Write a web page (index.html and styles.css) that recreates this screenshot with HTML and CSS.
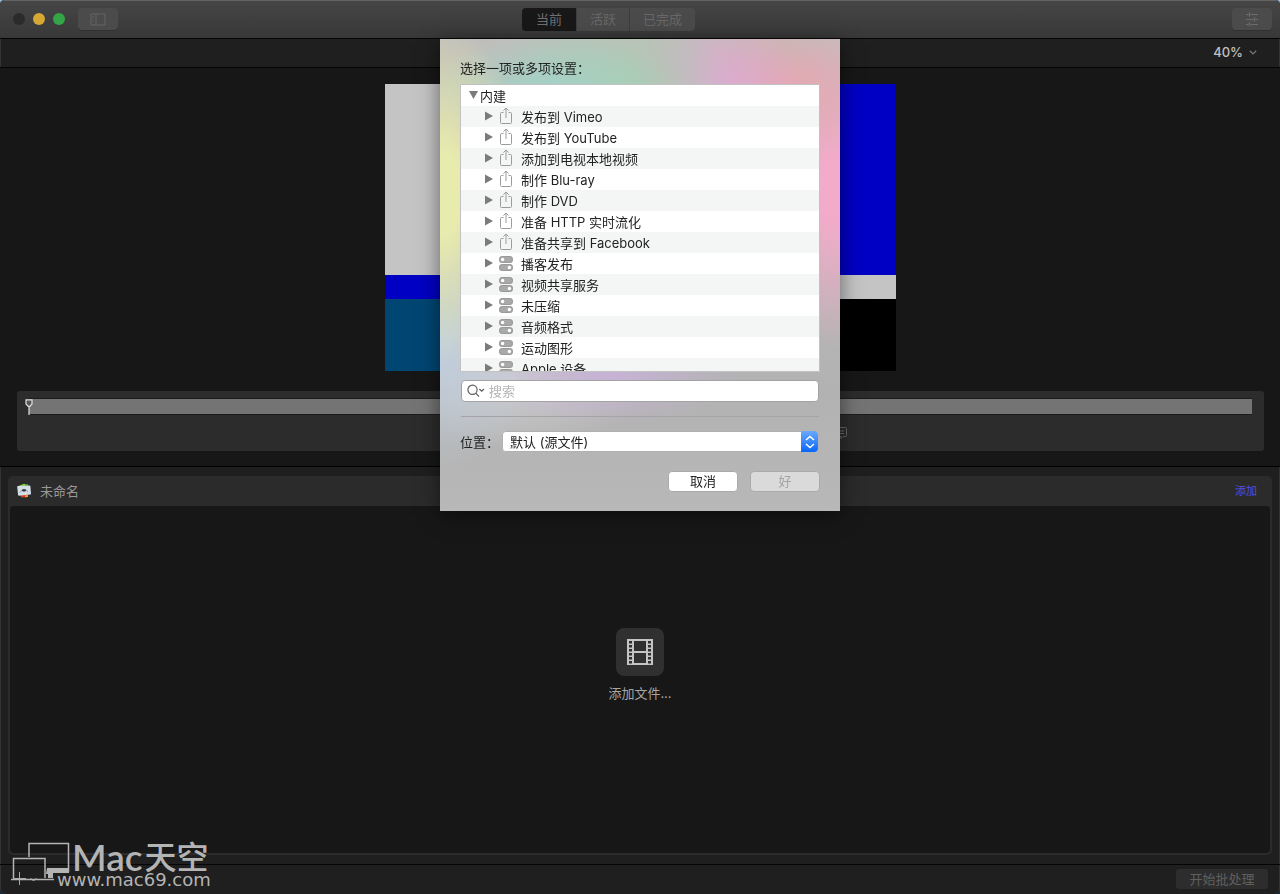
FILE: index.html
```html
<!DOCTYPE html>
<html lang="zh-CN">
<head>
    <meta charset="UTF-8">
    <meta name="viewport" content="width=device-width, initial-scale=1.0">
    <title>未命名</title>
    <link rel="stylesheet" href="styles.css">
</head>
<body>
    <!-- Iconos compartidos -->
    <svg class="sprite" width="0" height="0" aria-hidden="true">
        <symbol id="share" viewBox="0 0 14 18">
            <path d="M4.500 5.500H2.600Q1.500 5.500 1.500 6.600V15.400Q1.500 16.500 2.600 16.500H11.400Q12.500 16.500 12.500 15.400V6.600Q12.500 5.500 11.400 5.500H9.500M7 11V1M4.400 3.600L7 1L9.600 3.600" fill="none" stroke="#9b9b9b"/>
        </symbol>
        <symbol id="toggles" viewBox="0 0 14 18">
            <rect x="0" y="2" width="14" height="7" rx="3.5" fill="#a9a9a9"/>
            <rect x="0" y="10" width="14" height="7" rx="3.5" fill="#a9a9a9"/>
            <rect x=".5" y="2.5" width="13" height="6" rx="3" fill="none" stroke="#999"/>
            <rect x=".5" y="10.5" width="13" height="6" rx="3" fill="none" stroke="#999"/>
            <circle cx="3.6" cy="5.5" r="1.7" fill="#fff"/>
            <circle cx="10.4" cy="13.5" r="1.7" fill="#fff"/>
        </symbol>
        <symbol id="arrow" viewBox="0 0 8 10">
            <path d="M0 .5L8 5L0 9.5Z" fill="#7b7b7b"/>
        </symbol>
    </svg>

    <div class="window">
        <header class="toolbar">
            <div class="toolbar-side">
                <div class="lights">
                    <button class="light close" aria-label="关闭"></button>
                    <button class="light minimize" aria-label="最小化"></button>
                    <button class="light maximize" aria-label="缩放"></button>
                </div>
                <button class="tool-button" aria-label="边栏">
                    <svg width="16" height="13" viewBox="0 0 16 13" fill="none" stroke="#646464"><path d="M1 1H15V12H1ZM6 1V12"/><path d="M2.5 3.5H4M2.5 6H4M2.5 8.5H4" stroke-width=".8"/></svg>
                </button>
            </div>
            <nav class="segments">
                <button class="segment active">当前</button>
                <button class="segment">活跃</button>
                <button class="segment">已完成</button>
            </nav>
            <div class="toolbar-side right">
                <button class="tool-button" aria-label="检查器">
                    <svg width="14" height="14" viewBox="0 0 14 14" stroke="#6c6c6c"><path d="M1 2.5H3M6 2.5H13M1 7.5H8M11 7.5H13M1 12.5H3M6 12.5H13"/><path d="M4.5 .5V4.5M9.5 5.5V9.5M4.5 10.5V14" stroke-width="1.6"/></svg>
                </button>
            </div>
        </header>

        <div class="zoom-bar">
            <button class="zoom-button">40%
                <svg width="8" height="5" viewBox="0 0 8 5" fill="none" stroke="#777" stroke-width="1.3"><path d="M.8 .7L4 3.9L7.2 .7"/></svg>
            </button>
        </div>

        <section class="preview">
            <div class="color-bars">
                <div class="bar-row top">
                    <i class="gray"></i><i class="yellow"></i><i class="cyan"></i><i class="green"></i><i class="magenta"></i><i class="red"></i><i class="blue"></i>
                </div>
                <div class="bar-row middle">
                    <i class="blue"></i><i class="black"></i><i class="magenta"></i><i class="black"></i><i class="cyan"></i><i class="black"></i><i class="gray"></i>
                </div>
                <div class="bar-row bottom">
                    <i class="navy"></i><i class="white"></i><i class="purple"></i><i class="black"></i><i class="black"></i>
                </div>
            </div>
            <div class="timeline">
                <div class="track">
                    <svg class="playhead" width="8" height="16" viewBox="0 0 8 16"><path d="M1 .8H7V5L4.8 7.4H3.2L1 5Z" fill="#555" stroke="#e0e0e0" stroke-width="1.2"/><path d="M4 7.5V16" stroke="#e0e0e0" stroke-width="1.2"/></svg>
                </div>
                <button class="marker-button" aria-label="标记">
                    <svg width="14" height="14" viewBox="0 0 14 14" fill="none" stroke="#686868"><path d="M2.5 1.5H12.5Q13.5 1.5 13.5 2.5V9.5Q13.5 10.5 12.5 10.5H10L8 12.5V10.5H2.5Q1.5 10.5 1.5 9.5V2.5Q1.5 1.5 2.5 1.5ZM4 5H11M4 7.5H11"/></svg>
                </button>
            </div>
        </section>

        <main class="batch-area">
            <section class="batch">
                <div class="batch-header">
                    <svg width="16" height="16" viewBox="0 0 16 16">
                        <path d="M3.5 2.5L8 .8L11 1.5V4H3Z" fill="#7fce35"/>
                        <path d="M9 1.2L12 1V4H9Z" fill="#3a9d53"/>
                        <path d="M5 12L12 11V14L5 14.5Z" fill="#e1351f"/>
                        <path d="M9 12.5L12 12V14L9 14.3Z" fill="#f6a21e"/>
                        <path d="M1.2 4Q1 3 2 2.9L13.4 2.4Q14.3 2.3 14.4 3.2L15 10.7Q15 11.5 14.2 11.6L3.1 12.8Q2.2 12.9 2.1 12Z" fill="#d5dde6"/>
                        <path d="M4 9.500L6.500 6.500M12 9L9.500 6.300" stroke="#8b96a3"/>
                        <ellipse cx="8" cy="7.3" rx="2" ry="1.4" fill="#3b3f44"/>
                    </svg>
                    <span>未命名</span>
                    <a href="#" class="add-link">添加</a>
                </div>
                <div class="batch-body">
                    <button class="add-file">
                        <span class="film">
                            <svg width="26" height="28" viewBox="0 0 26 28">
                                <path d="M0 1H26V27H0Z" fill="#c4c4c4"/>
                                <path d="M7 3H19V13H7ZM7 15H19V25H7Z" fill="#303030"/>
                                <path d="M3.5 3V26M22.5 3V26" stroke="#303030" stroke-width="3" stroke-dasharray="2.5 1.5"/>
                            </svg>
                        </span>
                        添加文件...
                    </button>
                </div>
            </section>
        </main>

        <footer class="status-bar">
            <button class="plus-button" aria-label="添加">
                <svg width="24" height="14" viewBox="0 0 24 14" fill="none" stroke="#aaa"><path d="M6.5 0V13M0 6.5H13M17.5 6L20.5 9L23.5 6"/></svg>
            </button>
            <button class="start-button" disabled>开始批处理</button>
        </footer>

        <form class="dialog">
            <h2>选择一项或多项设置：</h2>
            <ul class="settings">
                <li class="group"><button type="button" class="disclosure open" aria-label="折叠"><svg width="9" height="8" viewBox="0 0 9 8"><path d="M0 0H9L4.5 8Z" fill="#7b7b7b"/></svg></button>内建</li>
                <li><button type="button" class="disclosure" aria-label="展开"><svg width="8" height="10"><use href="#arrow"/></svg></button><svg class="kind" width="14" height="18"><use href="#share"/></svg>发布到 Vimeo</li>
                <li><button type="button" class="disclosure" aria-label="展开"><svg width="8" height="10"><use href="#arrow"/></svg></button><svg class="kind" width="14" height="18"><use href="#share"/></svg>发布到 YouTube</li>
                <li><button type="button" class="disclosure" aria-label="展开"><svg width="8" height="10"><use href="#arrow"/></svg></button><svg class="kind" width="14" height="18"><use href="#share"/></svg>添加到电视本地视频</li>
                <li><button type="button" class="disclosure" aria-label="展开"><svg width="8" height="10"><use href="#arrow"/></svg></button><svg class="kind" width="14" height="18"><use href="#share"/></svg>制作 Blu-ray</li>
                <li><button type="button" class="disclosure" aria-label="展开"><svg width="8" height="10"><use href="#arrow"/></svg></button><svg class="kind" width="14" height="18"><use href="#share"/></svg>制作 DVD</li>
                <li><button type="button" class="disclosure" aria-label="展开"><svg width="8" height="10"><use href="#arrow"/></svg></button><svg class="kind" width="14" height="18"><use href="#share"/></svg>准备 HTTP 实时流化</li>
                <li><button type="button" class="disclosure" aria-label="展开"><svg width="8" height="10"><use href="#arrow"/></svg></button><svg class="kind" width="14" height="18"><use href="#share"/></svg>准备共享到 Facebook</li>
                <li><button type="button" class="disclosure" aria-label="展开"><svg width="8" height="10"><use href="#arrow"/></svg></button><svg class="kind" width="14" height="18"><use href="#toggles"/></svg>播客发布</li>
                <li><button type="button" class="disclosure" aria-label="展开"><svg width="8" height="10"><use href="#arrow"/></svg></button><svg class="kind" width="14" height="18"><use href="#toggles"/></svg>视频共享服务</li>
                <li><button type="button" class="disclosure" aria-label="展开"><svg width="8" height="10"><use href="#arrow"/></svg></button><svg class="kind" width="14" height="18"><use href="#toggles"/></svg>未压缩</li>
                <li><button type="button" class="disclosure" aria-label="展开"><svg width="8" height="10"><use href="#arrow"/></svg></button><svg class="kind" width="14" height="18"><use href="#toggles"/></svg>音频格式</li>
                <li><button type="button" class="disclosure" aria-label="展开"><svg width="8" height="10"><use href="#arrow"/></svg></button><svg class="kind" width="14" height="18"><use href="#toggles"/></svg>运动图形</li>
                <li><button type="button" class="disclosure" aria-label="展开"><svg width="8" height="10"><use href="#arrow"/></svg></button><svg class="kind" width="14" height="18"><use href="#toggles"/></svg>Apple 设备</li>
            </ul>
            <div class="search">
                <svg width="18" height="14" viewBox="0 0 18 14" fill="none" stroke="#5c5c5c"><circle cx="5.5" cy="5.8" r="4.6" stroke-width="1.2"/><path d="M8.8 9.2L12 12.6M12.4 5L14.7 7.2L17 5" stroke-width="1.2"/></svg>
                <input type="search" aria-label="搜索" placeholder="搜索">
            </div>
            <hr>
            <div class="location">
                <label for="location">位置：</label>
                <div class="select-box">
                    <select id="location">
                        <option>默认 (源文件)</option>
                    </select>
                    <span class="stepper">
                        <svg width="10" height="14" viewBox="0 0 10 14" fill="none" stroke="#fff" stroke-width="1.5"><path d="M1 5L5 1.500L9 5M1 9L5 12.500L9 9"/></svg>
                    </span>
                </div>
            </div>
            <div class="dialog-buttons">
                <button type="button">取消</button>
                <button type="submit" disabled>好</button>
            </div>
        </form>

        <div class="watermark">
            <svg width="60" height="40" viewBox="0 0 60 40" fill="none" stroke="#b4b4b4">
                <path d="M18 15V1.500H57.500V30" stroke-width="1.5"/>
                <path d="M36 26H58V31H42V36H37V32H35Z" fill="#b4b4b4" stroke="none"/>
                <path d="M2.500 36V16.500H34V36" stroke-width="1.5"/>
                <path d="M0 37.500H43" stroke-width="1.5"/>
            </svg>
            <div class="watermark-text">
                <div class="brand">Mac<span>天空</span></div>
                <div class="site">www.mac69.com</div>
            </div>
        </div>
    </div>
</body>
</html>
```
FILE: styles.css
```css
* {
    box-sizing: border-box;
}

body {
    margin: 0;
    font-family: Inter, "Noto Sans CJK SC", sans-serif;
    font-size: 13px;
    line-height: 20px;
    background: linear-gradient(#8fb6d8, #16283c);
}

button, input, select {
    font: inherit;
    margin: 0;
    padding: 0;
    border: none;
    background: none;
    color: inherit;
}

svg {
    display: block;
    flex: none;
}

.sprite {
    position: absolute;
}

.window {
    position: relative;
    display: flex;
    flex-direction: column;
    min-height: 100vh;
    background-color: #1f1f1f;
    border-radius: 5px;
    overflow: hidden;
    box-shadow: inset 1px 0 #333, inset -1px 0 #333;
}

/* Barra superior */
.toolbar {
    display: flex;
    align-items: center;
    height: 39px;
    padding: 0 8px 0 13px;
    background: linear-gradient(#464646, #383838);
    border-bottom: 1px solid #050505;
    box-shadow: inset 0 1px #646464;
}

.toolbar-side {
    display: flex;
    flex: 1;
    align-items: center;
    gap: 13px;
}

.toolbar-side.right {
    justify-content: flex-end;
}

.lights {
    display: flex;
    gap: 8px;
}

.light {
    width: 12px;
    height: 12px;
    border-radius: 50%;
    background-color: #2b2b2b;
}

.light.minimize {
    background-color: #d6a833;
}

.light.maximize {
    background-color: #34a546;
}

.tool-button {
    display: flex;
    align-items: center;
    justify-content: center;
    width: 40px;
    height: 22px;
    border-radius: 4px;
    background-color: #4b4b4b;
    box-shadow: 0 1px #303030;
}

.segments {
    display: flex;
    height: 23px;
    margin-right: 68px;
    border-radius: 4px;
    overflow: hidden;
    color: #686868;
}

.segment {
    padding: 0 13px;
    line-height: 22px;
    background-color: #4b4b4b;
    border-left: 1px solid #3e3e3e;
}

.segment.active {
    padding: 0 14px;
    background-color: #181818;
    color: #717171;
    border: none;
}

.zoom-bar {
    display: flex;
    align-items: center;
    justify-content: flex-end;
    height: 29px;
    padding: 0 23px 2px 0;
    border-bottom: 1px solid #050505;
}

.zoom-button {
    display: flex;
    align-items: center;
    gap: 6px;
    font-weight: 500;
    color: #c0c0c0;
}

/* Vista previa */
.preview {
    padding: 16px 16px 15px 17px;
    background-color: #171717;
    border-bottom: 1px solid #000;
}

.color-bars {
    width: 511px;
    height: 287px;
    margin: 0 auto 20px;
    display: flex;
    flex-direction: column;
}

.bar-row {
    display: flex;
}

.bar-row i {
    flex: 1;
}

.bar-row.top {
    flex: 8;
}

.bar-row.middle {
    flex: 1;
}

.bar-row.bottom {
    flex: 3;
}

.gray { background-color: #c4c4c4; }
.yellow { background-color: #c4c400; }
.cyan { background-color: #00c4c4; }
.green { background-color: #00c400; }
.magenta { background-color: #c400c4; }
.red { background-color: #c40000; }
.blue { background-color: #0000c4; }
.black { background-color: #000; }
.navy { background-color: #004673; }
.white { background-color: #fff; }
.purple { background-color: #32006a; }

.timeline {
    height: 60px;
    padding: 8px 12px;
    border-radius: 3px;
    background-color: #2c2c2c;
}

.track {
    position: relative;
    height: 15px;
    background-color: #747474;
    box-shadow: 0 1px #1c1c1c, 0 -1px #1c1c1c;
}

.playhead {
    position: absolute;
    left: -4px;
    top: 0;
}

.marker-button {
    display: block;
    margin: 12px 0 0 calc(50% + 192px);
}

/* Lote */
.batch-area {
    display: flex;
    flex: 1;
    padding: 9px 8px;
}

.batch {
    display: flex;
    flex: 1;
    flex-direction: column;
    padding: 0 2px 2px;
    border-radius: 5px;
    background-color: #2b2b2b;
}

.batch-header {
    display: flex;
    align-items: center;
    gap: 8px;
    height: 30px;
    padding: 0 13px 0 6px;
    color: #999;
}

.add-link {
    margin-left: auto;
    font-size: 11px;
    color: #5550e0;
    text-decoration: none;
}

.batch-body {
    display: flex;
    flex: 1;
    align-items: center;
    justify-content: center;
    border-radius: 4px;
    background-color: #171717;
}

.add-file {
    display: flex;
    flex-direction: column;
    align-items: center;
    gap: 7px;
    padding-bottom: 28px;
    color: #a5a5a5;
}

.film {
    display: flex;
    align-items: center;
    justify-content: center;
    width: 48px;
    height: 48px;
    border-radius: 8px;
    background-color: #303030;
}

.status-bar {
    display: flex;
    align-items: center;
    justify-content: space-between;
    height: 30px;
    padding: 0 12px 2px 13px;
    border-top: 1px solid #050505;
}

.start-button {
    width: 92px;
    height: 20px;
    border-radius: 3px;
    background-color: #2d2d2d;
    color: #606060;
}

/* Hoja de ajustes */
.dialog {
    position: absolute;
    top: 39px;
    left: 50%;
    width: 400px;
    margin-left: -200px;
    padding: 19px 20px;
    color: #222;
    background:
        radial-gradient(ellipse 90px 170px at 0 155px, #e8ebae 25%, transparent),
        radial-gradient(ellipse 100px 130px at 0 300px, #c0cfdf, transparent),
        radial-gradient(ellipse 120px 60px at 110px 52px, #a3d2c7, transparent),
        radial-gradient(ellipse 120px 75px at 175px 50px, #a9ceae, transparent),
        radial-gradient(ellipse 90px 70px at 275px 50px, #deaad6, transparent),
        radial-gradient(ellipse 100px 75px at 340px 50px, #e8a6ae, transparent),
        radial-gradient(ellipse 80px 160px at 395px 150px, #f2abc9 20%, transparent),
        radial-gradient(ellipse 130px 50px at 170px 336px, #c7b2d6, transparent),
        radial-gradient(ellipse 140px 70px at 70px 340px, #cfcfd2, transparent),
        linear-gradient(#c0bebb, #b2b2b2 75%, #b8b8b8);
    box-shadow: 0 4px 20px rgba(0, 0, 0, 0.5);
}

.dialog h2 {
    margin: 0 0 6px;
    font-size: 13px;
    font-weight: normal;
}

.settings {
    height: 288px;
    margin: 0;
    padding: 0;
    list-style: none;
    border: 1px solid #c2c2c2;
    background-color: #fff;
    overflow-y: auto;
    scrollbar-width: none;
}

.settings li {
    display: flex;
    align-items: center;
    height: 21px;
    padding-left: 24px;
}

.settings li:nth-child(even) {
    background-color: #f4f5f5;
}

.settings .group {
    padding-left: 8px;
}

.disclosure {
    margin: 0 6px 2px 0;
}

.disclosure.open {
    margin-right: 2px;
}

.kind {
    margin: 0 8px 2px 0;
}

.search {
    display: flex;
    align-items: center;
    gap: 4px;
    height: 22px;
    margin: 8px 1px 14px;
    padding: 0 5px;
    border: 1px solid #a3a3a3;
    border-radius: 4px;
    background-color: #fff;
}

.search input {
    flex: 1;
    min-width: 0;
    outline: none;
}

.search input::placeholder {
    color: #b5b5b5;
}

.dialog hr {
    height: 1px;
    margin: 0 1px 14px;
    border: none;
    background-color: #a5a3a6;
}

.location {
    display: flex;
    align-items: center;
    gap: 3px;
    margin-right: 2px;
}

.select-box {
    position: relative;
    flex: 1;
}

.select-box select {
    display: block;
    width: 100%;
    height: 21px;
    padding: 0 24px 0 8px;
    border-radius: 4px;
    background-color: #fff;
    box-shadow: inset 0 0 0 1px #b0b0b0;
    appearance: none;
}

.stepper {
    position: absolute;
    top: 0;
    right: 0;
    display: flex;
    align-items: center;
    justify-content: center;
    width: 17px;
    height: 21px;
    border-radius: 0 4px 4px 0;
    background: linear-gradient(#6aa9fb, #0a66f8);
    pointer-events: none;
}

.dialog-buttons {
    display: flex;
    justify-content: flex-end;
    gap: 12px;
    margin-top: 19px;
}

.dialog-buttons button {
    width: 70px;
    height: 21px;
    border: 1px solid #aaa;
    border-radius: 4px;
    line-height: 19px;
    background-color: #fff;
}

.dialog-buttons button:disabled {
    background-color: #dadada;
    color: #a5a5a5;
}

/* Marca de agua */
.watermark {
    position: absolute;
    left: 11px;
    bottom: 2px;
    display: flex;
    height: 50px;
    pointer-events: none;
}

.watermark-text {
    margin-left: -14px;
    color: #b4b4b4;
}

.brand {
    display: flex;
    gap: 2px;
    height: 29px;
    margin-left: 15px;
    font-family: Lato, "Noto Sans CJK SC", sans-serif;
    font-size: 37px;
    font-weight: 600;
    line-height: 29px;
    white-space: nowrap;
    color: #b4b4b4;
}

.brand span {
    font-size: 32px;
    font-weight: 500;
}

.site {
    font-family: "DejaVu Sans", sans-serif;
    font-size: 18px;
    line-height: 18px;
}
```
